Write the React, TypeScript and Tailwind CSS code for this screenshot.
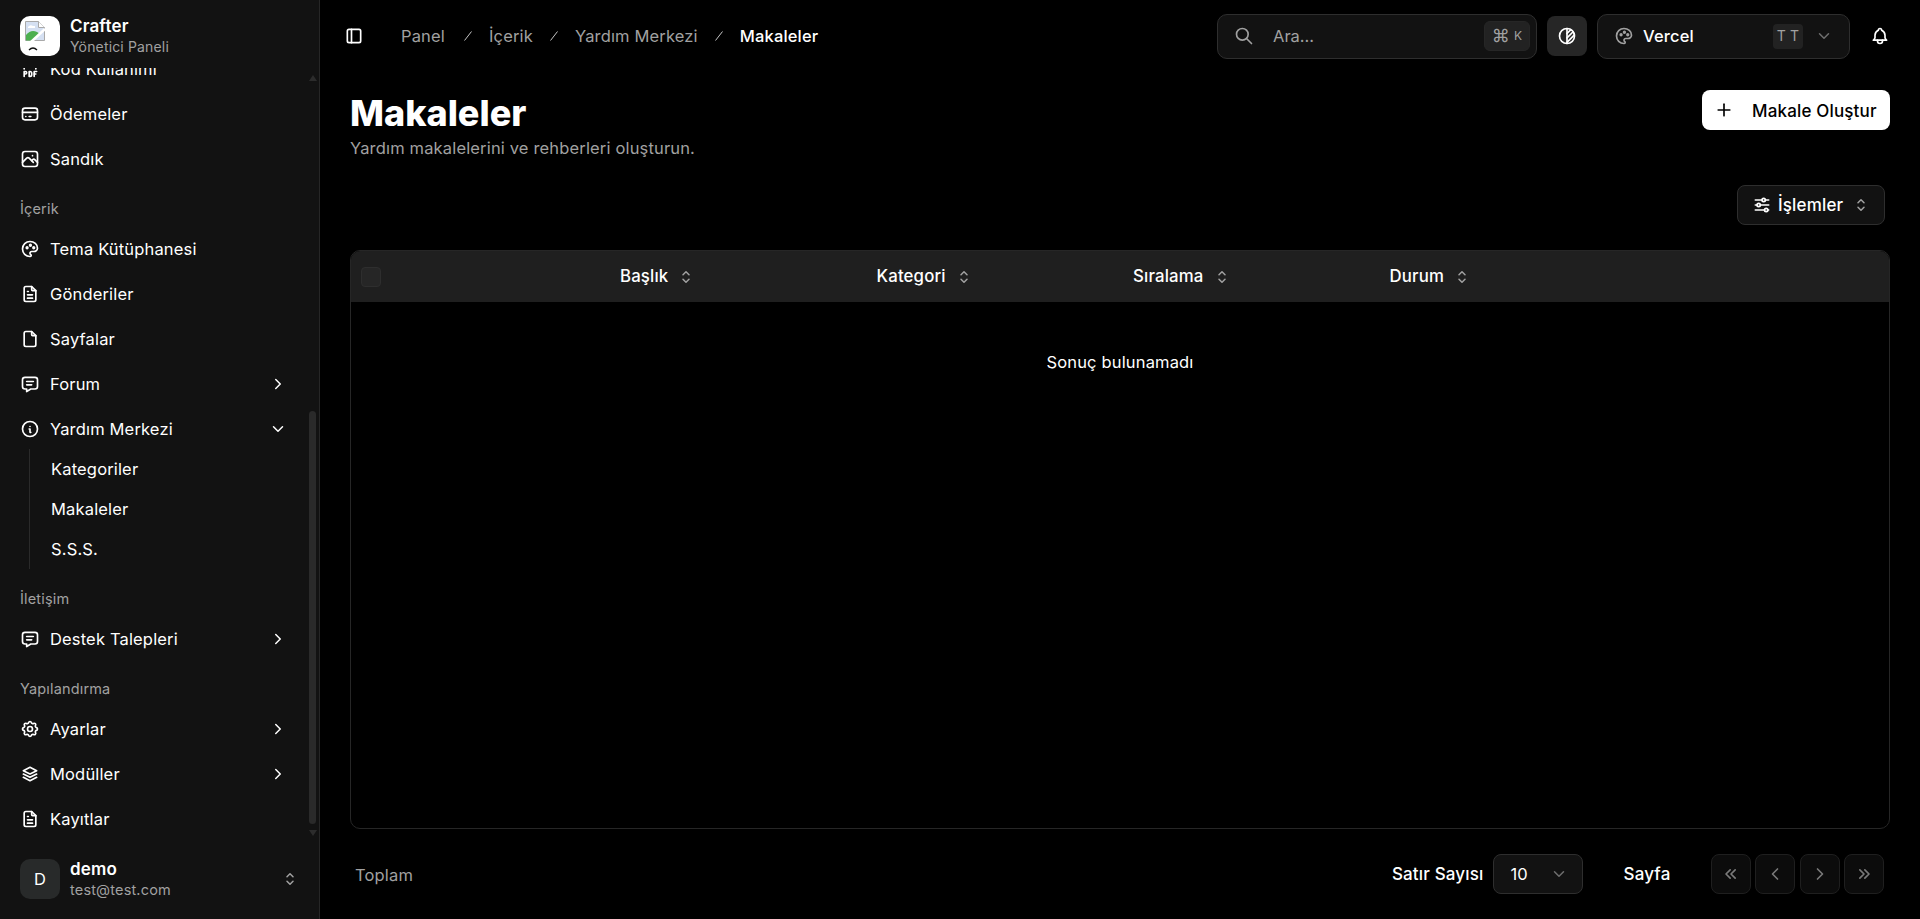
import {
  TbAdjustmentsHorizontal,
  TbBell,
  TbBrightness,
  TbChevronDown,
  TbChevronLeft,
  TbChevronRight,
  TbChevronsLeft,
  TbChevronsRight,
  TbCreditCard,
  TbFile,
  TbFileText,
  TbFileTypePdf,
  TbInfoCircle,
  TbLayoutSidebar,
  TbMessage,
  TbPalette,
  TbPhoto,
  TbPlus,
  TbSearch,
  TbSelector,
  TbSettings,
  TbStack2,
} from "react-icons/tb";
import type { IconType } from "react-icons";

function BrokenLogo() {
  return (
    <div className="relative h-10 w-10 shrink-0 overflow-hidden rounded-[10px] bg-white">
      <svg viewBox="0 0 40 40" className="h-10 w-10">
        <path d="M5.5 5.5h13l6 6v13h-19z" fill="#d5e0f2" stroke="#a9a9a9" />
        <path d="M18.5 5.5v6h6" fill="#fff" stroke="#a9a9a9" />
        <path d="M8 11q2-3 5-1h2v2H8z" fill="#fff" />
        <path d="M6 24.5V19q5-6 11-3l3 2-7 6.5z" fill="#4caf50" />
        <path d="M25 13 11 26" stroke="#fff" strokeWidth="2.5" />
        <path d="M9 34q4-4 8 0" fill="none" stroke="#111" strokeWidth="1.4" />
      </svg>
    </div>
  );
}

function NavItem({ icon: Icon, label, chevron }: { icon: IconType; label: string; chevron?: "right" | "down" }) {
  return (
    <div className="flex h-10 items-center gap-2.5 pl-5 pr-[32px] text-[16.5px] text-white">
      <Icon size={20} className="shrink-0" />
      <span className="flex-1">{label}</span>
      {chevron === "right" && <TbChevronRight size={18} />}
      {chevron === "down" && <TbChevronDown size={18} />}
    </div>
  );
}

function GroupLabel({ children }: { children: string }) {
  return <div className="flex h-10 items-center px-5 text-[14.5px] text-[#a1a1a1]">{children}</div>;
}

function Sidebar() {
  return (
    <aside className="flex h-[919px] w-[320px] shrink-0 flex-col border-r border-[#262626] bg-[#121212]">
      <div className="flex h-[68px] shrink-0 items-start gap-2.5 px-5 pt-4">
        <BrokenLogo />
        <div>
          <div className="text-[17px] font-semibold leading-5 text-white">Crafter</div>
          <div className="mt-px text-[14px] leading-5 text-[#a1a1a1]">Yönetici Paneli</div>
        </div>
      </div>

      <div className="relative min-h-0 flex-1 overflow-hidden">
        <div className="-mt-[19px] flex flex-col">
          <div className="flex flex-col gap-[5px]">
            <NavItem icon={TbFileTypePdf} label="Kod Kullanımı" />
            <NavItem icon={TbCreditCard} label="Ödemeler" />
            <NavItem icon={TbPhoto} label="Sandık" />
          </div>
          <div className="mt-[10px]">
            <GroupLabel>İçerik</GroupLabel>
          </div>
          <div className="flex flex-col gap-[5px]">
            <NavItem icon={TbPalette} label="Tema Kütüphanesi" />
            <NavItem icon={TbFileText} label="Gönderiler" />
            <NavItem icon={TbFile} label="Sayfalar" />
            <NavItem icon={TbMessage} label="Forum" chevron="right" />
            <NavItem icon={TbInfoCircle} label="Yardım Merkezi" chevron="down" />
          </div>
          <div className="ml-[29px] flex flex-col border-l border-[#2a2a2a] pl-[21px] text-[16.5px] text-white">
            <div className="flex h-10 items-center">Kategoriler</div>
            <div className="flex h-10 items-center">Makaleler</div>
            <div className="flex h-10 items-center">S.S.S.</div>
          </div>
          <div className="mt-[10px]">
            <GroupLabel>İletişim</GroupLabel>
          </div>
          <NavItem icon={TbMessage} label="Destek Talepleri" chevron="right" />
          <div className="mt-[10px]">
            <GroupLabel>Yapılandırma</GroupLabel>
          </div>
          <div className="flex flex-col gap-[5px]">
            <NavItem icon={TbSettings} label="Ayarlar" chevron="right" />
            <NavItem icon={TbStack2} label="Modüller" chevron="right" />
            <NavItem icon={TbFileText} label="Kayıtlar" />
          </div>
        </div>
        {/* native scrollbar */}
        <div className="absolute right-[3px] top-0 flex h-full w-[7px] flex-col items-center">
          <div className="mt-[7px] h-0 w-0 border-x-[4px] border-b-[6px] border-x-transparent border-b-[#2c2c2c]" />
          <div className="mt-[330px] h-[413px] w-[7px] shrink-0 rounded bg-[#2a2a2a]" />
          <div className="mt-[6px] h-0 w-0 border-x-[4px] border-t-[6px] border-x-transparent border-t-[#2c2c2c]" />
        </div>
      </div>

      <div className="flex h-[78px] shrink-0 items-start gap-2.5 px-5 pt-[18px]">
        <div className="flex h-10 w-10 items-center justify-center rounded-[10px] bg-[#282a2a] text-[16.5px] text-white">D</div>
        <div className="flex-1">
          <div className="text-[17px] font-semibold leading-5 text-white">demo</div>
          <div className="mt-px text-[14.5px] leading-5 text-[#a1a1a1]">test@test.com</div>
        </div>
        <TbSelector size={18} className="mt-[11px] text-[#a1a1a1]" />
      </div>
    </aside>
  );
}

function Crumb({ className = "" }: { className?: string }) {
  return (
    <svg width="16" height="16" viewBox="0 0 16 16" className={`shrink-0 text-[#c4c4c4] ${className}`}>
      <path d="M4.5 12.5 11.5 3.5" stroke="currentColor" fill="none" />
    </svg>
  );
}

function Header() {
  return (
    <header className="flex h-[72px] shrink-0 items-center pl-[24px] pr-[30px]">
      <TbLayoutSidebar size={20} className="text-white" />
      <nav className="ml-[37px] flex items-center gap-[13px] text-[16.5px] text-[#a1a1a1]">
        <span>Panel</span>
        <Crumb className="ml-[2px]" />
        <span>İçerik</span>
        <Crumb />
        <span>Yardım Merkezi</span>
        <Crumb />
        <span className="font-medium text-white">Makaleler</span>
      </nav>
      <div className="ml-auto flex items-center">
        <div className="flex h-[45px] w-[320px] items-center rounded-[10px] border border-[#2e2e2e] bg-[#121212] pl-4 pr-[6px]">
          <TbSearch size={20} className="text-[#a1a1a1]" />
          <span className="ml-[19px] flex-1 text-[16.5px] tracking-normal text-[#a1a1a1]">Ara…</span>
          <div className="flex h-[30px] w-[46px] items-center justify-center gap-1 rounded-md border border-[#262626] bg-[#222222] text-xs text-[#a1a1a1]">
            <span className="text-[18px] leading-none">⌘</span>
            <span>K</span>
          </div>
        </div>
        <div className="ml-[10px] flex h-10 w-10 items-center justify-center rounded-lg bg-[#262626] text-white">
          <TbBrightness size={20} />
        </div>
        <div className="ml-[10px] flex h-[45px] w-[253px] items-center rounded-[10px] border border-[#2e2e2e] bg-[#121212] pl-4 pr-4">
          <TbPalette size={20} className="text-[#a1a1a1]" />
          <span className="ml-[9px] flex-1 text-[16.5px] font-medium text-white">Vercel</span>
          <div className="flex h-[25px] w-[30px] items-center justify-center gap-1 rounded bg-[#222222] text-sm text-[#a1a1a1]">
            <span>T</span>
            <span>T</span>
          </div>
          <TbChevronDown size={18} className="ml-[12px] text-[#6e6e6e]" />
        </div>
        <TbBell size={20} className="ml-5 text-white" />
      </div>
    </header>
  );
}

function SortHead({ label }: { label: string }) {
  return (
    <div className="flex items-center gap-[9px] text-[16.8px] font-medium text-white">
      <span>{label}</span>
      <TbSelector size={18} className="text-[#a1a1a1]" />
    </div>
  );
}

function PageBtn({ icon: Icon }: { icon: IconType }) {
  return (
    <div className="flex h-10 w-10 items-center justify-center rounded-lg border border-[#1f1f1f] bg-[#0c0c0c] text-[#7a7a7a]">
      <Icon size={20} />
    </div>
  );
}

export default function App() {
  return (
    <div className="flex h-[919px] w-[1920px] overflow-hidden bg-black font-['Inter',sans-serif] tracking-[0.01em]">
      <Sidebar />
      <main className="flex min-w-0 flex-1 flex-col">
        <Header />
        <div className="flex flex-1 flex-col pl-[30px] pr-[30px]">
          <div className="flex items-start justify-between">
            <div className="pt-[18px]">
              <h1 className="text-4xl font-extrabold leading-[46px] tracking-normal text-white">Makaleler</h1>
              <p className="text-[16.5px] leading-6 text-[#a1a1a1]">Yardım makalelerini ve rehberleri oluşturun.</p>
            </div>
            <button className="mt-[18px] flex h-10 w-[188px] items-center rounded-lg bg-white pl-3 text-[17px] font-medium text-black">
              <TbPlus size={20} />
              <span className="ml-[18px] mt-[3px]">Makale Oluştur</span>
            </button>
          </div>

          <div className="mt-[25px] flex justify-end pr-[5px]">
            <div className="flex h-10 w-[148px] items-center rounded-lg border border-[#2e2e2e] bg-[#121212] pl-[14px] text-[17px] font-medium text-white">
              <TbAdjustmentsHorizontal size={20} />
              <span className="ml-[6px] mt-[2px]">İşlemler</span>
              <TbSelector size={18} className="ml-[9px] text-[#a1a1a1]" />
            </div>
          </div>

          <div className="mt-[25px] flex h-[579px] shrink-0 flex-col overflow-hidden rounded-[10px] border border-[#262626]">
            <div className="grid h-[51px] shrink-0 grid-cols-[269px_256.5px_256.5px_256.5px_1fr] items-center bg-[#1f1f1f]">
              <div className="pl-[10px]">
                <div className="h-5 w-5 rounded border border-[#2e2e2e] bg-[#262626]" />
              </div>
              <SortHead label="Başlık" />
              <SortHead label="Kategori" />
              <SortHead label="Sıralama" />
              <SortHead label="Durum" />
            </div>
            <div className="pt-[48px] text-center text-[16.5px] text-white">Sonuç bulunamadı</div>
          </div>

          <div className="flex flex-1 items-center pl-[5px] pr-[6px]">
            <span className="mt-[2px] text-[16.5px] text-[#a1a1a1]">Toplam</span>
            <div className="ml-auto flex items-center">
              <span className="mt-[2px] text-[17px] font-medium text-white">Satır Sayısı</span>
              <div className="ml-[10px] flex h-10 w-[90px] items-center rounded-lg border border-[#2e2e2e] bg-[#121212] pl-4 pr-[14px] text-[16.5px] text-white">
                <span className="flex-1">10</span>
                <TbChevronDown size={18} className="text-[#6e6e6e]" />
              </div>
              <span className="ml-10 mt-[2px] text-[17px] font-medium text-white">Sayfa</span>
              <div className="ml-10 flex gap-[4.5px]">
                <PageBtn icon={TbChevronsLeft} />
                <PageBtn icon={TbChevronLeft} />
                <PageBtn icon={TbChevronRight} />
                <PageBtn icon={TbChevronsRight} />
              </div>
            </div>
          </div>
        </div>
      </main>
    </div>
  );
}
